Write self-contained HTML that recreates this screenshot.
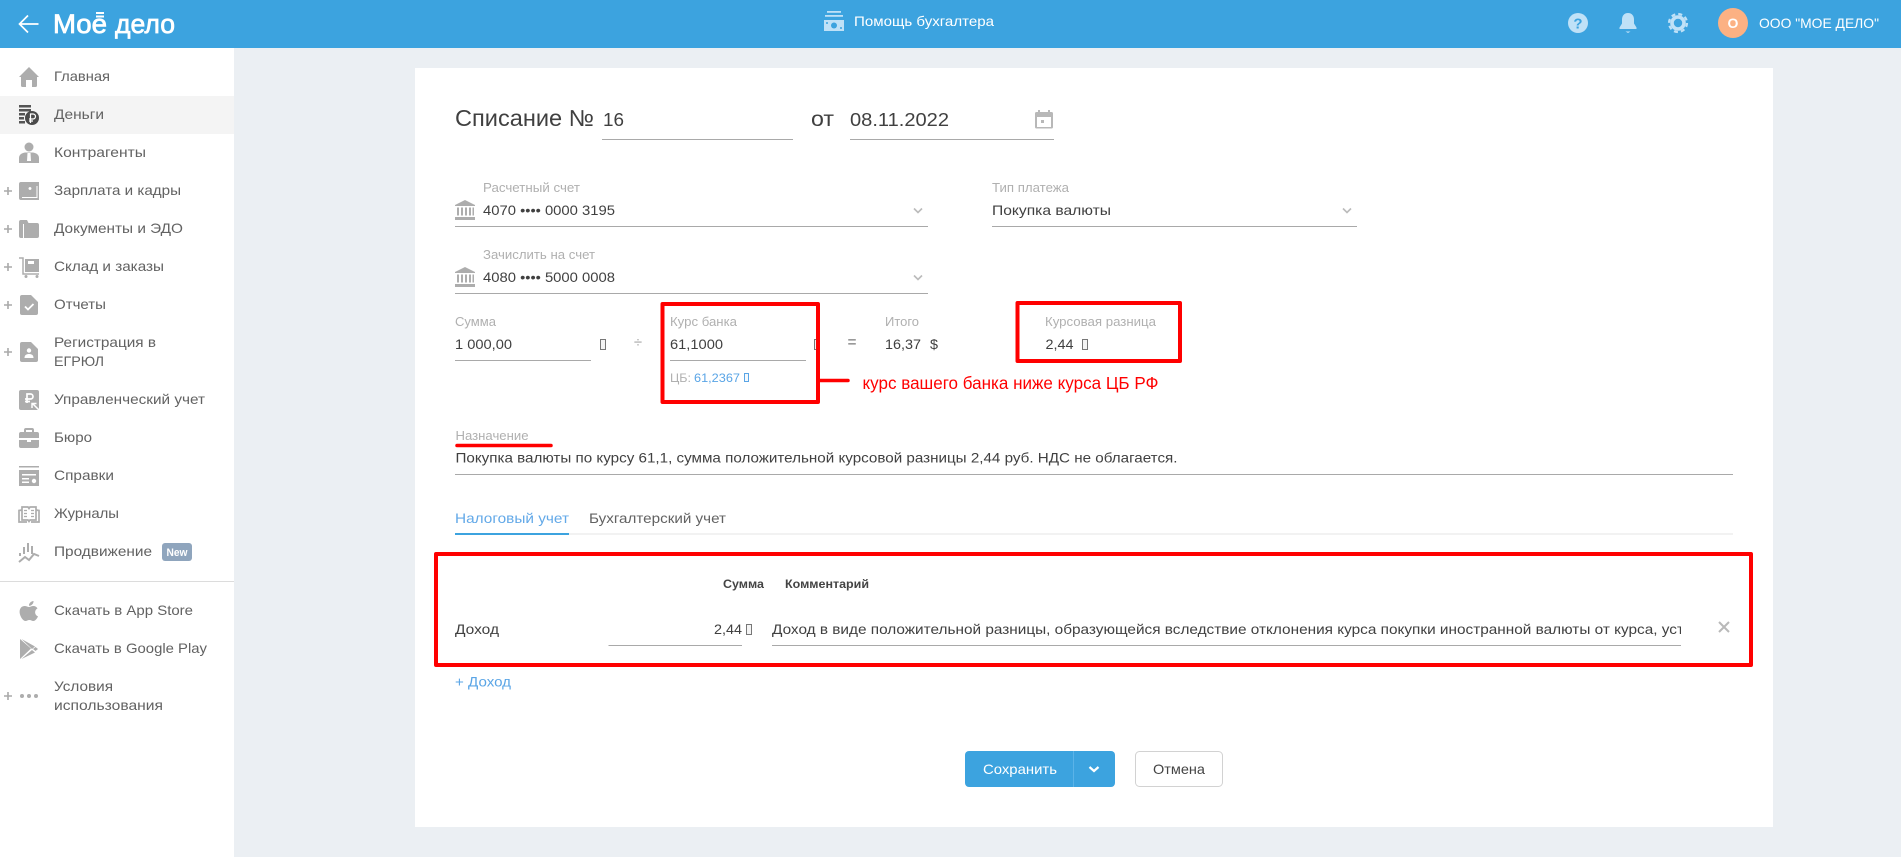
<!DOCTYPE html>
<html lang="ru"><head><meta charset="utf-8"><title>Списание</title>
<style>
html,body{margin:0;padding:0;width:1901px;height:857px;overflow:hidden;background:#ebeff3}
svg{display:block;position:absolute;left:0;top:0}
text{font-family:"Liberation Sans",sans-serif}
.m{font-size:14px;fill:#626262}
.l{font-size:12.5px;fill:#b0b0b0}
.v{font-size:14px;fill:#404040}
.ic{fill:#adadad}
.ln{stroke:#a9a9a9;stroke-width:1}
.tf{fill:#f4f4f4;stroke:#777;stroke-width:1}
.ch{fill:none;stroke:#bbb;stroke-width:1.6}
.rb{fill:none;stroke:#f00;stroke-width:4;stroke-linejoin:round}
</style></head><body>
<svg width="1901" height="857" viewBox="0 0 1901 857" xmlns="http://www.w3.org/2000/svg">
<defs><clipPath id="c"><rect x="772" y="615" width="909" height="28"/></clipPath></defs>
<rect width="1901" height="857" fill="#ebeff3"/>
<!-- header -->
<rect width="1901" height="48" fill="#3ca3df"/>
<path d="M38.5 24H20M28 15.5 19.5 24l8.5 8.5" fill="none" stroke="#fff" stroke-width="1.7"/>
<text x="53" y="33" font-size="27" fill="#fff" stroke="#fff" stroke-width=".8" textLength="54" lengthAdjust="spacingAndGlyphs">Мое</text>
<rect x="96" y="12" width="8" height="2" fill="#fff"/><rect x="96" y="15.5" width="8" height="2" fill="#fff"/>
<text x="115" y="33" font-size="27" fill="#fff" stroke="#fff" stroke-width=".7" textLength="60" lengthAdjust="spacingAndGlyphs">дело</text>
<g fill="#bfe1f7"><rect x="827" y="11" width="14" height="1.8"/><rect x="825" y="15" width="18" height="1.8"/><path d="M824 20h20v11h-20z"/></g>
<circle cx="834" cy="25.5" r="3" fill="#3ca3df"/><circle cx="827" cy="23" r="1" fill="#3ca3df"/><circle cx="841" cy="28" r="1" fill="#3ca3df"/>
<text x="854" y="26" font-size="14" fill="#fff" textLength="140" lengthAdjust="spacingAndGlyphs">Помощь бухгалтера</text>
<circle cx="1578" cy="23" r="10" fill="#bfe1f7"/>
<text x="1578" y="28.5" font-size="15" font-weight="bold" fill="#3ca3df" text-anchor="middle">?</text>
<path d="M1628 13c-4 0-6 3-6 6.5v4l-2.500 4v1.500h17v-1.500l-2.500-4v-4c0-3.500-2-6.500-6-6.500zM1625.500 31.500h5l-2.500 1.500z" fill="#bfe1f7"/>
<circle cx="1678" cy="23" r="6" fill="none" stroke="#bfe1f7" stroke-width="3.6"/>
<circle cx="1678" cy="23" r="9" fill="none" stroke="#bfe1f7" stroke-width="2.2" stroke-dasharray="4 3.07"/>
<circle cx="1733" cy="23" r="15" fill="#fcb183"/>
<text x="1733" y="28" font-size="14" font-weight="bold" fill="#fff" text-anchor="middle">О</text>
<text x="1759" y="28" font-size="14" fill="#fff" textLength="120" lengthAdjust="spacingAndGlyphs">ООО "МОЕ ДЕЛО"</text>
<!-- sidebar -->
<rect y="48" width="234" height="809" fill="#fff"/>
<rect y="96" width="234" height="38" fill="#f4f4f4"/>
<rect y="581" width="234" height="1" fill="#dcdcdc"/>
<g>
<text class="m" x="54" y="81" textLength="56" lengthAdjust="spacingAndGlyphs">Главная</text>
<text class="m" x="54" y="119" textLength="50" lengthAdjust="spacingAndGlyphs">Деньги</text>
<text class="m" x="54" y="157" textLength="92" lengthAdjust="spacingAndGlyphs">Контрагенты</text>
<text class="m" x="54" y="195" textLength="127" lengthAdjust="spacingAndGlyphs">Зарплата и кадры</text>
<text class="m" x="54" y="233" textLength="129" lengthAdjust="spacingAndGlyphs">Документы и ЭДО</text>
<text class="m" x="54" y="271" textLength="110" lengthAdjust="spacingAndGlyphs">Склад и заказы</text>
<text class="m" x="54" y="309" textLength="52" lengthAdjust="spacingAndGlyphs">Отчеты</text>
<text class="m" x="54" y="347" textLength="102" lengthAdjust="spacingAndGlyphs">Регистрация в</text>
<text class="m" x="54" y="366" textLength="50" lengthAdjust="spacingAndGlyphs">ЕГРЮЛ</text>
<text class="m" x="54" y="404" textLength="151" lengthAdjust="spacingAndGlyphs">Управленческий учет</text>
<text class="m" x="54" y="442" textLength="38" lengthAdjust="spacingAndGlyphs">Бюро</text>
<text class="m" x="54" y="480" textLength="60" lengthAdjust="spacingAndGlyphs">Справки</text>
<text class="m" x="54" y="518" textLength="65" lengthAdjust="spacingAndGlyphs">Журналы</text>
<text class="m" x="54" y="556" textLength="98" lengthAdjust="spacingAndGlyphs">Продвижение</text>
<rect x="162" y="543" width="30" height="18" rx="3" fill="#8fa5bd"/>
<text x="166.5" y="556" font-size="11" font-weight="bold" fill="#fff" textLength="21" lengthAdjust="spacingAndGlyphs">New</text>
<text class="m" x="54" y="615" textLength="139" lengthAdjust="spacingAndGlyphs">Скачать в App Store</text>
<text class="m" x="54" y="653" textLength="153" lengthAdjust="spacingAndGlyphs">Скачать в Google Play</text>
<text class="m" x="54" y="691" textLength="59" lengthAdjust="spacingAndGlyphs">Условия</text>
<text class="m" x="54" y="710" textLength="109" lengthAdjust="spacingAndGlyphs">использования</text>
</g>
<!-- plus signs -->
<g stroke="#aaa" stroke-width="1.6">
<path d="M4 191h8M8 187v8M4 229h8M8 225v8M4 267h8M8 263v8M4 305h8M8 301v8M4 352h8M8 348v8M4 696h8M8 692v8"/>
</g>
<!-- sidebar icons -->
<path class="ic" d="M29 67 39 77H37V85.5a1.500 1.500 0 0 1-1.500 1.500H32V80H26V87H22.5A1.500 1.500 0 0 1 21 85.5V77H19Z"/>
<g fill="#555"><rect x="19" y="105" width="12" height="2.5"/><rect x="19" y="109" width="12" height="2.5"/><rect x="19" y="113" width="6" height="2.5"/><rect x="19" y="117" width="5" height="2.5"/><rect x="19" y="121" width="6" height="2.5"/></g>
<circle cx="32" cy="118" r="7" fill="#4a4a4a"/><path d="M30.5 123v-9h2.5a2 2 0 0 1 0 5h-4M29 121h4" fill="none" stroke="#fff" stroke-width="1.2"/>
<g class="ic"><circle cx="29" cy="147" r="4.5"/><path d="M19 163v-5c0-3.500 3-5 6-5.500h8c3 .5 6 2 6 5.500v5z"/></g>
<path d="M27.5 153h3l.5 8h-4z" fill="#fff"/>
<path class="ic" fill-rule="evenodd" d="M21 182h18v18H21a2 2 0 0 1-2-2V184a2 2 0 0 1 2-2zM36.5 186v11H22v1h15.5v-12zM30 187a1.500 1.500 0 1 0 .01 0z"/>
<path class="ic" d="M19 222a2 2 0 0 1 2-2h6l1.500 3h8.500a2 2 0 0 1 2 2v11a2 2 0 0 1-2 2H21a2 2 0 0 1-2-2z"/><rect x="23" y="224" width="1" height="14" fill="#fff"/>
<path d="M19 258h4v16h16" fill="none" stroke="#adadad" stroke-width="1.5"/>
<rect class="ic" x="25" y="259" width="14" height="13"/><rect x="28" y="261" width="6" height="3" fill="#fff"/>
<circle class="ic" cx="26" cy="276.5" r="1.5"/><circle class="ic" cx="37" cy="276.5" r="1.5"/>
<path class="ic" d="M22 295h9l7 7v11a2 2 0 0 1-2 2H22a2 2 0 0 1-2-2V297a2 2 0 0 1 2-2z"/>
<path d="M25 306.5 28 309.5 33.5 304" fill="none" stroke="#fff" stroke-width="1.8"/>
<path class="ic" d="M22 342h9l7 7v11a2 2 0 0 1-2 2H22a2 2 0 0 1-2-2V344a2 2 0 0 1 2-2z"/>
<circle cx="29" cy="350.5" r="2.2" fill="#fff"/><path d="M24.5 358c0-3 2-4 4.500-4s4.500 1 4.500 4z" fill="#fff"/>
<rect class="ic" x="19" y="390" width="20" height="20" rx="2"/>
<path d="M27 403v-9h3.500a2.500 2.500 0 0 1 0 5H25M25 401.5h5" fill="none" stroke="#fff" stroke-width="1.7"/>
<path d="M39 410l-6.500-6.500M32 408v-4.500h4.500" fill="none" stroke="#fff" stroke-width="1.5"/>
<path class="ic" d="M26 428h6a2 2 0 0 1 2 2v2h3a2 2 0 0 1 2 2v4H19v-4a2 2 0 0 1 2-2h3v-2a2 2 0 0 1 2-2zM26 430v2h6v-2zM19 440h8v2h4v-2h8v6a2 2 0 0 1-2 2H21a2 2 0 0 1-2-2z"/>
<rect class="ic" x="19" y="466" width="20" height="1.5"/><rect class="ic" x="19" y="470" width="20" height="16"/>
<g fill="#fff"><rect x="22" y="474" width="14" height="1.5"/><rect x="22" y="478" width="7" height="1.5"/><rect x="22" y="481.5" width="7" height="1.5"/><circle cx="34" cy="481" r="2.2"/></g>
<path d="M22 507h6l1 1.500 1-1.500h6v13h-6l-1 1.500-1-1.500h-6zM22 510l-3 .5v11.500h8M36 510l3 .5v11.500h-8" fill="#fff" stroke="#adadad" stroke-width="1.7"/>
<path d="M24 510.5h3M24 513.5h3M24 516.5h3M31 510.5h3M31 513.5h3M31 516.5h3" stroke="#adadad" stroke-width="1.3"/>
<path d="M20 556v-3M24 554v-7M28 552v-9M32 554v-8M19 562l6-5 4 3 5-6 5 2" fill="none" stroke="#adadad" stroke-width="2"/>
<path class="ic" d="M33.5 601c.3 2.500-2 5-4.500 4.800-.3-2.400 2.200-4.700 4.500-4.800zM29 607c1.200 0 2.500-1 4.300-1 1.800 0 3.300 1 4.200 2.400-3.500 2-3 6.700.5 8-1 2.300-2.700 4.600-4.700 4.600-1.500 0-2.200-1-3.900-1s-2.500 1-3.900 1c-3 0-5.900-5.500-5.900-9.200 0-4 2.600-5.800 5-5.800 1.900 0 3.200 1 4.400 1z"/>
<path class="ic" d="M20 639l11 9.500-11 10.500zM21.500 639l13.500 7.500-3 2.500zM35.500 647l2.500 2-2.500 2-2.500-2zM21.500 659l10.500-9 3 2.500z"/>
<g class="ic"><circle cx="22" cy="696" r="2"/><circle cx="29" cy="696" r="2"/><circle cx="36" cy="696" r="2"/></g>
<!-- card -->
<rect x="415" y="68" width="1358" height="759" fill="#fff"/>
<text x="455" y="126" font-size="23" fill="#404040" textLength="139" lengthAdjust="spacingAndGlyphs">Списание №</text>
<text x="603" y="126" font-size="18" fill="#404040" textLength="21" lengthAdjust="spacingAndGlyphs">16</text>
<line class="ln" x1="602" y1="139.5" x2="793" y2="139.5"/>
<text x="811" y="126" font-size="21" fill="#404040" textLength="23" lengthAdjust="spacingAndGlyphs">от</text>
<text x="850" y="126" font-size="18" fill="#404040" textLength="99" lengthAdjust="spacingAndGlyphs">08.11.2022</text>
<line class="ln" x1="850" y1="139.5" x2="1054" y2="139.5"/>
<path fill="#b8b8b8" fill-rule="evenodd" d="M1038 110h2v2h8v-2h2v2h1.500a1.500 1.500 0 0 1 1.500 1.500v13.500a1.500 1.500 0 0 1-1.500 1.500h-15a1.500 1.500 0 0 1-1.500-1.500V113.500a1.500 1.500 0 0 1 1.500-1.500h1.500zM1037 117v10h14v-10zM1041 120h3v3h-3z"/>
<!-- accounts -->
<text class="l" x="483" y="192" textLength="97" lengthAdjust="spacingAndGlyphs">Расчетный счет</text>
<text class="v" x="483" y="215" textLength="132" lengthAdjust="spacingAndGlyphs">4070 •••• 0000 3195</text>
<line class="ln" x1="455" y1="226.5" x2="928" y2="226.5"/>
<path class="ch" d="M914 208.500l4 4 4-4"/>
<path class="ic" d="M465 200l10 5v1h-20v-1zM455 217h20v3h-20zM457 207.5h2v8h-2zM461 207.5h2v8h-2zM465 207.5h2v8h-2zM469 207.5h2v8h-2zM472.500 207.5h1.500v8h-1.500z"/>
<text class="l" x="483" y="259" textLength="112" lengthAdjust="spacingAndGlyphs">Зачислить на счет</text>
<text class="v" x="483" y="282" textLength="132" lengthAdjust="spacingAndGlyphs">4080 •••• 5000 0008</text>
<line class="ln" x1="455" y1="293.5" x2="928" y2="293.5"/>
<path class="ch" d="M914 275.500l4 4 4-4"/>
<path class="ic" d="M465 267l10 5v1h-20v-1zM455 284h20v3h-20zM457 274.5h2v8h-2zM461 274.5h2v8h-2zM465 274.5h2v8h-2zM469 274.5h2v8h-2zM472.500 274.5h1.500v8h-1.500z"/>
<text class="l" x="992" y="192" textLength="77" lengthAdjust="spacingAndGlyphs">Тип платежа</text>
<text class="v" x="992" y="215" textLength="119" lengthAdjust="spacingAndGlyphs">Покупка валюты</text>
<line class="ln" x1="992" y1="226.5" x2="1357" y2="226.5"/>
<path class="ch" d="M1343 208.500l4 4 4-4"/>
<!-- amounts -->
<text class="l" x="455" y="326" textLength="41" lengthAdjust="spacingAndGlyphs">Сумма</text>
<text class="v" x="455" y="349" textLength="57" lengthAdjust="spacingAndGlyphs">1 000,00</text>
<line class="ln" x1="455" y1="360.5" x2="591" y2="360.5"/>
<rect class="tf" x="600.5" y="339.5" width="5" height="10"/>
<text x="638" y="347" font-size="15" fill="#aaa" text-anchor="middle">÷</text>
<text class="l" x="670" y="326" textLength="67" lengthAdjust="spacingAndGlyphs">Курс банка</text>
<text class="v" x="670" y="349" textLength="53" lengthAdjust="spacingAndGlyphs">61,1000</text>
<line class="ln" x1="670" y1="360.5" x2="806" y2="360.5"/>
<rect class="tf" x="814.5" y="339.5" width="5" height="10"/>
<text x="670" y="382" font-size="12" fill="#b0b0b0" textLength="21" lengthAdjust="spacingAndGlyphs">ЦБ:</text>
<text x="694" y="382" font-size="12" fill="#5aa5e6" textLength="46" lengthAdjust="spacingAndGlyphs">61,2367</text>
<rect x="744.5" y="373.5" width="4" height="8" fill="#f4f9fd" stroke="#5aa5e6"/>
<text x="852" y="347" font-size="15" font-weight="bold" fill="#999" text-anchor="middle">=</text>
<text class="l" x="885" y="326" textLength="34" lengthAdjust="spacingAndGlyphs">Итого</text>
<text class="v" x="885" y="349" textLength="36" lengthAdjust="spacingAndGlyphs">16,37</text>
<text class="v" x="930" y="349" textLength="8" lengthAdjust="spacingAndGlyphs">$</text>
<text class="l" x="1045" y="326" textLength="111" lengthAdjust="spacingAndGlyphs">Курсовая разница</text>
<text class="v" x="1045.5" y="349" textLength="28" lengthAdjust="spacingAndGlyphs">2,44</text>
<rect class="tf" x="1082.5" y="339.5" width="5" height="10"/>
<text x="862.5" y="389" font-size="17.5" fill="#f00" textLength="296" lengthAdjust="spacingAndGlyphs">курс вашего банка ниже курса ЦБ РФ</text>
<text class="l" x="455.5" y="440" textLength="73" lengthAdjust="spacingAndGlyphs">Назначение</text>
<text class="v" x="455.5" y="462.5" textLength="722" lengthAdjust="spacingAndGlyphs">Покупка валюты по курсу 61,1, сумма положительной курсовой разницы 2,44 руб. НДС не облагается.</text>
<line class="ln" x1="455" y1="474.5" x2="1733" y2="474.5"/>
<!-- tabs -->
<text x="455" y="523" font-size="14" fill="#63a9e8" textLength="114" lengthAdjust="spacingAndGlyphs">Налоговый учет</text>
<text x="589" y="523" font-size="14" fill="#626262" textLength="137" lengthAdjust="spacingAndGlyphs">Бухгалтерский учет</text>
<rect x="455" y="533.5" width="1278" height="1" fill="#e6e6e6"/>
<rect x="455" y="533" width="114" height="2" fill="#3ca3df"/>
<!-- table -->
<text x="723" y="588" font-size="12" font-weight="bold" fill="#444" textLength="41" lengthAdjust="spacingAndGlyphs">Сумма</text>
<text x="785" y="588" font-size="12" font-weight="bold" fill="#444" textLength="84" lengthAdjust="spacingAndGlyphs">Комментарий</text>
<text class="v" x="455" y="634" textLength="44" lengthAdjust="spacingAndGlyphs">Доход</text>
<text class="v" x="714" y="634" textLength="28" lengthAdjust="spacingAndGlyphs">2,44</text>
<line class="ln" x1="608.5" y1="645.5" x2="742" y2="645.5"/>
<rect class="tf" x="746.5" y="624.5" width="5" height="10"/>
<g clip-path="url(#c)"><text class="v" x="772" y="634" textLength="912" lengthAdjust="spacingAndGlyphs">Доход в виде положительной разницы, образующейся вследствие отклонения курса покупки иностранной валюты от курса, уст</text></g>
<line class="ln" x1="772" y1="645.5" x2="1681" y2="645.5"/>
<path d="M1719 622l10 10M1729 622l-10 10" fill="none" stroke="#b9b9b9" stroke-width="2"/>
<text x="455" y="686.5" font-size="14" fill="#5aa5e6" textLength="56" lengthAdjust="spacingAndGlyphs">+ Доход</text>
<!-- buttons -->
<rect x="965" y="751" width="150" height="36" rx="4" fill="#3ca3df"/>
<rect x="1073" y="751" width="1" height="36" fill="#5bb3e8"/>
<text x="983" y="774" font-size="14" fill="#fff" textLength="74" lengthAdjust="spacingAndGlyphs">Сохранить</text>
<path d="M1089.5 767l4.500 4 4.500-4" fill="none" stroke="#fff" stroke-width="2.2"/>
<rect x="1135.5" y="751.5" width="87" height="35" rx="4" fill="#fff" stroke="#d2d2d2"/>
<text x="1153" y="774" font-size="14" fill="#444" textLength="52" lengthAdjust="spacingAndGlyphs">Отмена</text>
<!-- red annotations -->
<rect class="rb" x="662.5" y="304" width="155.5" height="98"/>
<rect class="rb" x="1017.5" y="303" width="162.5" height="58"/>
<rect class="rb" x="436" y="554" width="1315" height="111"/>
<path d="M820 380.500h28" stroke="#f00" stroke-width="3.5" stroke-linecap="round"/>
<path d="M457 445.500h94" stroke="#f00" stroke-width="3.5" stroke-linecap="round"/>
</svg>
</body></html>
